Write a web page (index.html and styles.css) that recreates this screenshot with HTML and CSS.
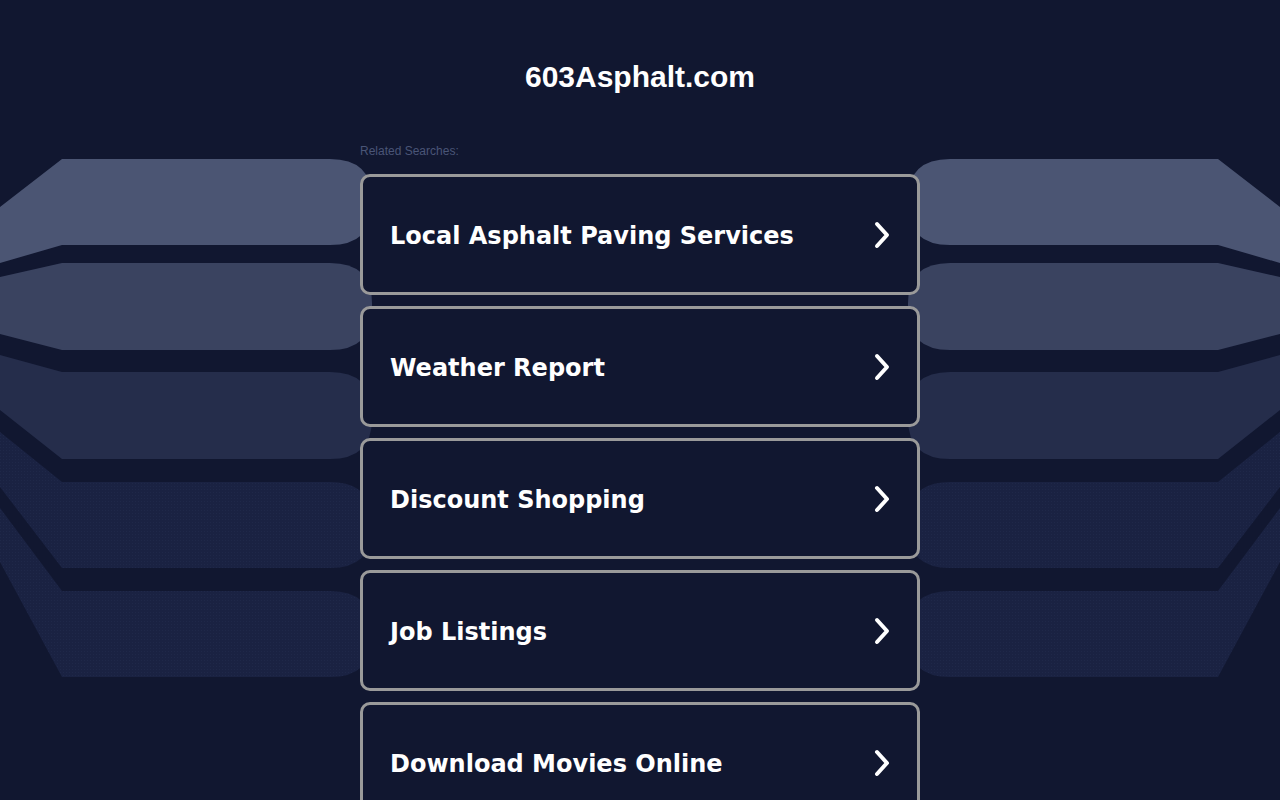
FILE: index.html
```html
<!DOCTYPE html>
<html lang="en">

<head>
    <meta charset="UTF-8">
    <title>603Asphalt.com</title>

    <link rel="stylesheet" href="styles.css">
</head>

<body>
    <!-- background bands behind the link list -->
    <svg class="bands" width="1280" height="800" viewBox="0 0 1280 800">
        <defs>
            <pattern id="dots" width="3" height="3" patternUnits="userSpaceOnUse">
                <rect width="3" height="3" fill="#1a2242" />
                <rect width="1" height="1" fill="#1f2849" />
            </pattern>
        </defs>
        <g class="left">
            <path fill="#4b5573" d="M0,207 L62,159 H330 Q372,159 372,199 V205 Q372,245 330,245 H62 L0,263 Z" />
            <path fill="#3a4360" d="M0,277 L62,263 H330 Q372,263 372,303 V310 Q372,350 330,350 H62 L0,334 Z" />
            <path fill="#252d4b" d="M0,355 L62,372 H330 Q372,372 372,412 V419 Q372,459 330,459 H62 L0,410 Z" />
            <path fill="url(#dots)" d="M0,432 L62,482 H330 Q372,482 372,522 V528 Q372,568 330,568 H62 L0,487 Z" />
            <path fill="url(#dots)" d="M0,508 L62,591 H330 Q372,591 372,631 V637 Q372,677 330,677 H62 L0,562 Z" />
        </g>
        <g class="right" transform="translate(1280,0) scale(-1,1)">
            <path fill="#4b5573" d="M0,207 L62,159 H330 Q372,159 372,199 V205 Q372,245 330,245 H62 L0,263 Z" />
            <path fill="#3a4360" d="M0,277 L62,263 H330 Q372,263 372,303 V310 Q372,350 330,350 H62 L0,334 Z" />
            <path fill="#252d4b" d="M0,355 L62,372 H330 Q372,372 372,412 V419 Q372,459 330,459 H62 L0,410 Z" />
            <path fill="url(#dots)" d="M0,432 L62,482 H330 Q372,482 372,522 V528 Q372,568 330,568 H62 L0,487 Z" />
            <path fill="url(#dots)" d="M0,508 L62,591 H330 Q372,591 372,631 V637 Q372,677 330,677 H62 L0,562 Z" />
        </g>
    </svg>

    <main class="side">
        <h1 class="domain">603Asphalt.com</h1>

        <section class="searches">
            <p class="label">Related Searches:</p>

            <a class="result" href="#">
                <span>Local Asphalt Paving Services</span>
                <svg class="arrow" width="18" height="28" viewBox="0 0 18 28"><path d="M4 3 L14 14 L4 25" /></svg>
            </a>
            <a class="result" href="#">
                <span>Weather Report</span>
                <svg class="arrow" width="18" height="28" viewBox="0 0 18 28"><path d="M4 3 L14 14 L4 25" /></svg>
            </a>
            <a class="result" href="#">
                <span>Discount Shopping</span>
                <svg class="arrow" width="18" height="28" viewBox="0 0 18 28"><path d="M4 3 L14 14 L4 25" /></svg>
            </a>
            <a class="result" href="#">
                <span>Job Listings</span>
                <svg class="arrow" width="18" height="28" viewBox="0 0 18 28"><path d="M4 3 L14 14 L4 25" /></svg>
            </a>
            <a class="result" href="#">
                <span>Download Movies Online</span>
                <svg class="arrow" width="18" height="28" viewBox="0 0 18 28"><path d="M4 3 L14 14 L4 25" /></svg>
            </a>
        </section>
    </main>

</body></html>
```

FILE: styles.css
```css
body {
    margin: 0;
    background: #111730;
    font-family: "Liberation Sans", Arial, sans-serif;
    overflow: hidden;
}

.bands {
    position: absolute;
    top: 0;
    left: 0;
    z-index: 0;
}

.side {
    position: relative;
    z-index: 1;
    width: 560px;
    margin: 0 auto;
    padding-top: 58px;
}

.domain {
    margin: 0;
    color: #ffffff;
    font-size: 30px;
    line-height: 38px;
    text-align: center;
}

.searches {
    margin-top: 48px;
}

.label {
    margin: 0 0 16px;
    color: #4a5577;
    font-size: 12px;
    line-height: 14px;
}

.result {
    display: flex;
    align-items: center;
    justify-content: space-between;
    box-sizing: border-box;
    height: 121px;
    margin-bottom: 11px;
    padding: 0 26px 0 27px;
    border: 3px solid #9a9a9a;
    border-radius: 10px;
    background: #111730;
    color: #ffffff;
    text-decoration: none;
    font-family: "DejaVu Sans", Verdana, sans-serif;
    font-weight: bold;
    font-size: 24px;
}

.result span {
    padding-top: 2px;
}

.arrow path {
    fill: none;
    stroke: #ffffff;
    stroke-width: 4;
    stroke-linecap: round;
    stroke-linejoin: round;
}
```
